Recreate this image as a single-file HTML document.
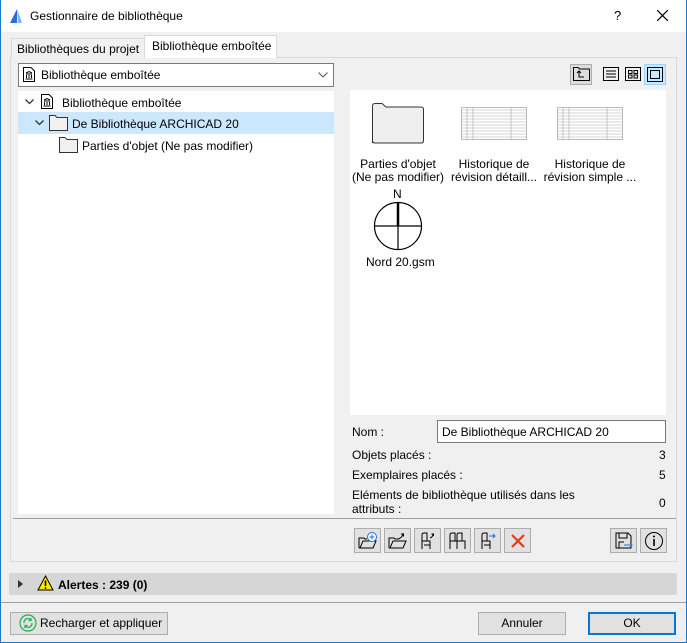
<!DOCTYPE html>
<html><head><meta charset="utf-8"><style>
*{box-sizing:border-box;margin:0;padding:0}
body{width:687px;height:643px;overflow:hidden;background:#f0f0f0;font-family:"Liberation Sans",sans-serif;font-size:12px;color:#000;position:relative}
.a{position:absolute}
.btn{position:absolute;background:#e1e1e1;border:1px solid #adadad;text-align:center}
.ib{position:absolute;top:528px;width:27px;height:25px;background:#e1e1e1;border:1px solid #adadad}
.ib svg{position:absolute;left:3px;top:2px}
.t{position:absolute;white-space:nowrap}
</style></head><body>
<div class="a" style="left:0;top:0;width:687px;height:32px;background:#fff"></div>
<div class="a" style="left:0;top:0;width:1px;height:643px;background:#1979ca"></div>
<div class="a" style="left:686px;top:0;width:1px;height:643px;background:#1979ca"></div>
<div class="a" style="left:0;top:642px;width:687px;height:1px;background:#1979ca"></div>
<svg class="a" style="left:9px;top:8px" width="14" height="16"><path d="M1 15 L8 1 L8 15Z" fill="#2a6fd6"/><path d="M8 1 L13 15 L9 15Z" fill="#7fb4f0"/></svg>
<div class="t" style="left:30px;top:9px;font-size:12px">Gestionnaire de bibliothèque</div>
<div class="t" style="left:614px;top:8px;font-size:13px">?</div>
<svg class="a" style="left:657px;top:10px" width="11" height="11"><path d="M0 0L11 11M11 0L0 11" stroke="#000" stroke-width="1.2"/></svg>

<div class="a" style="left:10px;top:57px;width:667px;height:505px;border:1px solid #d9d9d9;background:#f0f0f0"></div>
<div class="a" style="left:11px;top:38px;width:134px;height:20px;border:1px solid #d9d9d9;border-bottom:none;background:#f0f0f0"></div>
<div class="t" style="left:17px;top:42px">Bibliothèques du projet</div>
<div class="a" style="left:144px;top:35px;width:133px;height:23px;border:1px solid #d9d9d9;border-bottom:none;background:#fff"></div>
<div class="t" style="left:152px;top:39px">Bibliothèque emboîtée</div>

<div class="a" style="left:18px;top:63px;width:316px;height:24px;border:1px solid #7a7a7a;background:#fff"></div>
<svg class="a" style="left:23px;top:67px" width="12" height="15"><path d="M.5 .5H8L11.5 4V14.5H.5Z" fill="#fff" stroke="#000"/><path d="M3 6L6 4.5L9 6M3 7H9M3.5 8V11M6 8V11M8.5 8V11M2.5 12H9.5" stroke="#000" fill="none"/></svg>
<div class="t" style="left:41px;top:68px">Bibliothèque emboîtée</div>
<svg class="a" style="left:318px;top:72px" width="10" height="6"><path d="M.5 .5L5 5L9.5 .5" stroke="#555" fill="none"/></svg>

<div class="a" style="left:18px;top:91px;width:316px;height:423px;background:#fff"></div>
<div class="a" style="left:18px;top:112px;width:316px;height:22px;background:#cce8ff"></div>
<svg class="a" style="left:25px;top:99px" width="9" height="6"><path d="M.5 .5L4.5 4.5L8.5 .5" stroke="#333" fill="none" stroke-width="1.3"/></svg>
<svg class="a" style="left:41px;top:94px" width="12" height="15"><path d="M.5 .5H8L11.5 4V14.5H.5Z" fill="#fff" stroke="#000"/><path d="M3 6L6 4.5L9 6M3 7H9M3.5 8V11M6 8V11M8.5 8V11M2.5 12H9.5" stroke="#000" fill="none"/></svg>
<div class="t" style="left:62px;top:96px">Bibliothèque emboîtée</div>
<svg class="a" style="left:35px;top:120px" width="9" height="6"><path d="M.5 .5L4.5 4.5L8.5 .5" stroke="#333" fill="none" stroke-width="1.3"/></svg>
<svg class="a" style="left:49px;top:115px" width="19" height="16"><path d="M.5 15.5V.5H6L8 2.5H18.5V15.5Z" fill="#f0f0f0" stroke="#333"/></svg>
<div class="t" style="left:72px;top:117px">De Bibliothèque ARCHICAD 20</div>
<svg class="a" style="left:59px;top:137px" width="19" height="16"><path d="M.5 15.5V.5H6L8 2.5H18.5V15.5Z" fill="#f0f0f0" stroke="#333"/></svg>
<div class="t" style="left:82px;top:139px">Parties d'objet (Ne pas modifier)</div>

<div class="a" style="left:570px;top:64px;width:22px;height:21px;background:#ddd;border:1px solid #adadad"></div>
<svg class="a" style="left:573px;top:67px" width="17" height="14"><path d="M.5 13.5V.5H5L6.5 2H16.5V13.5Z" fill="none" stroke="#000"/><path d="M4 6L6 4L8 6M6 4V10H11" stroke="#000" fill="none"/></svg>
<svg class="a" style="left:603px;top:67px" width="16" height="14"><rect x=".5" y=".5" width="15" height="13" fill="none" stroke="#000"/><path d="M3 4H13M3 7H13M3 10H13" stroke="#000"/></svg>
<svg class="a" style="left:625px;top:67px" width="16" height="14"><rect x=".5" y=".5" width="15" height="13" fill="none" stroke="#000"/><rect x="3.5" y="3.5" width="3.5" height="3" fill="none" stroke="#000"/><rect x="9" y="3.5" width="3.5" height="3" fill="none" stroke="#000"/><rect x="3.5" y="8" width="3.5" height="3" fill="none" stroke="#000"/><rect x="9" y="8" width="3.5" height="3" fill="none" stroke="#000"/></svg>
<div class="a" style="left:644px;top:64px;width:22px;height:21px;background:#cce8ff;border:1px solid #99d1ff"></div>
<svg class="a" style="left:647px;top:67px" width="16" height="15"><rect x=".5" y=".5" width="15" height="14" fill="none" stroke="#000"/><rect x="3.5" y="3.5" width="9" height="8" fill="none" stroke="#000"/></svg>

<div class="a" style="left:350px;top:90px;width:316px;height:325px;background:#fff"></div>
<svg class="a" style="left:372px;top:103px" width="52" height="41"><path d="M.5 40V3Q.5 .5 3 .5H10L14 4H49Q51.5 4 51.5 6.5V37.5Q51.5 40 49 40H3Q.5 40 .5 37.5Z" fill="#efefef" stroke="#333"/></svg>
<svg class="a" style="left:461px;top:107px" width="66" height="33"><rect x=".5" y=".5" width="65" height="32" fill="#fff" stroke="#bbb"/><g stroke="#aaa" stroke-width=".6"><path d="M0 3H66M0 6H66M0 9H66M0 12H66M0 15H66M0 18H66M0 21H66M0 24H66M0 27H66M0 30H66M6 0V33M12 0V33M50 0V33"/></g></svg>
<svg class="a" style="left:557px;top:107px" width="66" height="33"><rect x=".5" y=".5" width="65" height="32" fill="#fff" stroke="#bbb"/><g stroke="#aaa" stroke-width=".6"><path d="M0 3H66M0 6H66M0 9H66M0 12H66M0 15H66M0 18H66M0 21H66M0 24H66M0 27H66M0 30H66M6 0V33M12 0V33M50 0V33"/></g></svg>
<div class="t" style="left:338px;top:158px;width:120px;text-align:center;line-height:13px">Parties d'objet<br>(Ne pas modifier)</div>
<div class="t" style="left:434px;top:158px;width:120px;text-align:center;line-height:13px">Historique de<br>révision détaill...</div>
<div class="t" style="left:530px;top:158px;width:120px;text-align:center;line-height:13px">Historique de<br>révision simple ...</div>
<div class="t" style="left:393px;top:187px">N</div>
<svg class="a" style="left:373px;top:201px" width="50" height="50"><circle cx="25" cy="25" r="23.5" fill="none" stroke="#000" stroke-width="1.2"/><path d="M25 1.5V48.5M1.5 25H48.5" stroke="#000" stroke-width="1.2"/><path d="M25 2V25" stroke="#000" stroke-width="2.5"/></svg>
<div class="t" style="left:366px;top:255px">Nord 20.gsm</div>

<div class="t" style="left:352px;top:425px">Nom :</div>
<div class="a" style="left:437px;top:420px;width:229px;height:23px;background:#fff;border:1px solid #7a7a7a"></div>
<div class="t" style="left:442px;top:425px">De Bibliothèque ARCHICAD 20</div>
<div class="t" style="left:352px;top:448px">Objets placés :</div><div class="t" style="left:659px;top:448px">3</div>
<div class="t" style="left:352px;top:468px">Exemplaires placés :</div><div class="t" style="left:659px;top:468px">5</div>
<div class="t" style="left:352px;top:488px;line-height:14px">Eléments de bibliothèque utilisés dans les<br>attributs :</div><div class="t" style="left:659px;top:496px">0</div>

<div class="a" style="left:13px;top:518px;width:663px;height:1px;background:#a0a0a0"></div>

<div class="ib" style="left:354px"><svg width="20" height="20"><path d="M1 17V7H6L7 8H9M1 17H15L18 10H5L2 17" fill="none" stroke="#000"/><circle cx="14" cy="6" r="4.5" fill="#fff" stroke="#1e6fd9"/><path d="M14 3.5V8.5M11.5 6H16.5" stroke="#1e6fd9"/></svg></div>
<div class="ib" style="left:384px"><svg width="20" height="20"><path d="M1 17V7H6L7 8H10M1 17H15L18 10H5L2 17" fill="none" stroke="#000"/><path d="M10 8Q14 7 15 3M13 3H15.5V5.5" fill="none" stroke="#000"/></svg></div>
<div class="ib" style="left:414px"><svg width="20" height="20"><path d="M4 18V4Q4 2 6 2H9V10M4 10H12V18M6 14H12" fill="none" stroke="#000"/><path d="M12 7Q15 6 15 3M13.5 3H15.5V5" fill="none" stroke="#000"/></svg></div>
<div class="ib" style="left:444px"><svg width="20" height="20"><path d="M2 18V4Q2 2 4 2H7V10M2 10H9V18M9 10V4Q9 2 11 2H14V10M9 10H17V18" fill="none" stroke="#000"/></svg></div>
<div class="ib" style="left:474px"><svg width="20" height="20"><path d="M4 18V4Q4 2 6 2H9V10M4 10H12V18M6 14H12" fill="none" stroke="#000"/><path d="M11 5H17M15 3L17 5L15 7" fill="none" stroke="#1e6fd9"/></svg></div>
<div class="ib" style="left:504px"><svg width="20" height="20"><path d="M4 4L16 16M16 4L4 16" stroke="#e8391a" stroke-width="2.2"/></svg></div>
<div class="ib" style="left:610px"><svg width="20" height="20"><path d="M2 2H14L17 5V17H2Z" fill="none" stroke="#000"/><path d="M5 2V7H13V2M5 17V11H10" fill="none" stroke="#000"/><path d="M10 14H18M16 12L18 14L16 16" fill="none" stroke="#1e6fd9"/></svg></div>
<div class="ib" style="left:640px"><svg width="20" height="20"><circle cx="10" cy="10" r="8.5" fill="none" stroke="#000"/><path d="M10 8V15" stroke="#000" stroke-width="1.6"/><circle cx="10" cy="5.5" r="1" fill="#000"/></svg></div>

<div class="a" style="left:9px;top:573px;width:668px;height:22px;background:#d6d6d6;border-radius:2px"></div>
<svg class="a" style="left:18px;top:580px" width="5" height="8"><path d="M0 0L5 4L0 8Z" fill="#333"/></svg>
<svg class="a" style="left:37px;top:575px" width="17" height="16"><path d="M8.5 1L16 15H1Z" fill="#ffe600" stroke="#000"/><path d="M8.5 5.5V11" stroke="#000" stroke-width="1.6"/><circle cx="8.5" cy="13" r=".9"/></svg>
<div class="t" style="left:58px;top:578px;font-weight:bold">Alertes : 239 (0)</div>
<div class="a" style="left:1px;top:602px;width:685px;height:1px;background:#a0a0a0"></div>

<div class="btn" style="left:10px;top:612px;width:158px;height:23px"></div>
<svg class="a" style="left:19px;top:614px" width="18" height="18"><circle cx="9" cy="9" r="8" fill="none" stroke="#1fae4f" stroke-width="1.2"/><path d="M5 9A4 4 0 0 1 12 6M13 9A4 4 0 0 1 6 12M12 4V6.5H9.5M6 14V11.5H8.5" fill="none" stroke="#1fae4f" stroke-width="1.2"/></svg>
<div class="t" style="left:40px;top:616px">Recharger et appliquer</div>
<div class="btn" style="left:478px;top:612px;width:88px;height:23px;line-height:21px">Annuler</div>
<div class="btn" style="left:588px;top:612px;width:88px;height:23px;line-height:19px;border:2px solid #0078d7">OK</div>
</body></html>
